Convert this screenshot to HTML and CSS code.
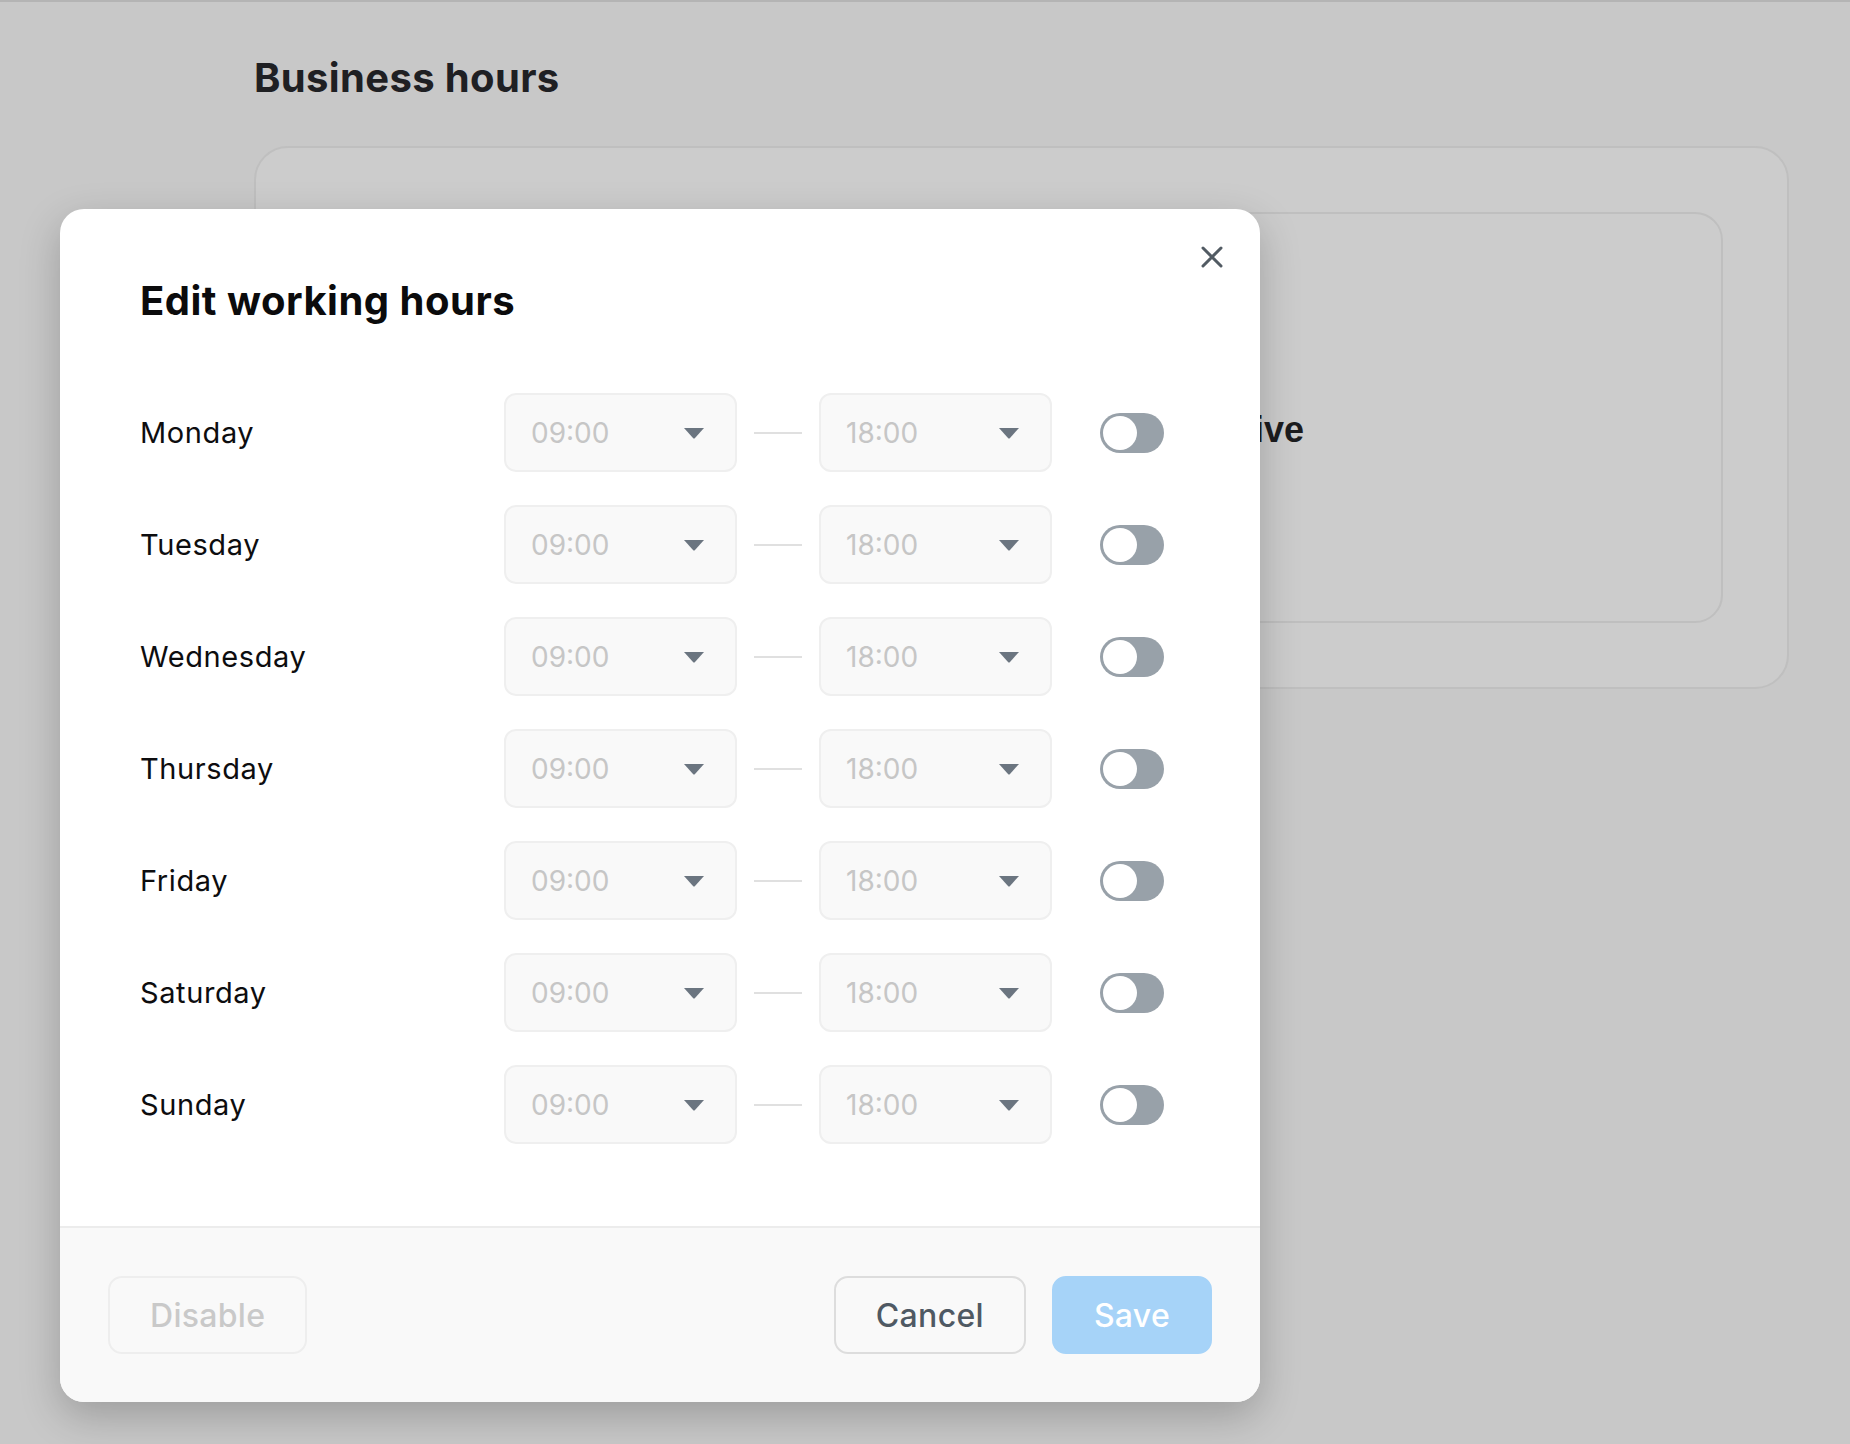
FILE: index.html
```html
<!DOCTYPE html>
<html lang="en">
<head>
    <meta charset="UTF-8">
    <meta name="viewport" content="width=device-width, initial-scale=1.0">
    <title>Business hours</title>
    <link rel="stylesheet" href="styles.css">
</head>
<body>
    <main class="page">
        <h1 class="page-title">Business hours</h1>
        <section class="hours-card">
            <div class="hours-inner">
                <p class="hours-status">Inactive</p>
            </div>
        </section>
    </main>

    <div class="modal">
        <button class="modal-close" aria-label="Close">
            <svg width="22" height="22" viewBox="0 0 22 22">
                <path d="M2 2 L20 20 M20 2 L2 20" stroke="#525b63" stroke-width="3" stroke-linecap="round" fill="none"/>
            </svg>
        </button>

        <div class="modal-body">
            <h2 class="modal-title">Edit working hours</h2>

            <div class="days">
                <div class="day-row">
                    <span class="day-name">Monday</span>
                    <div class="time-select"><span>09:00</span><svg class="caret" width="22" height="12" viewBox="0 0 22 12"><path d="M1 1 H21 L12 11 Q11 12 10 11 Z" fill="#6b7580"/></svg></div>
                    <span class="dash"></span>
                    <div class="time-select"><span>18:00</span><svg class="caret" width="22" height="12" viewBox="0 0 22 12"><path d="M1 1 H21 L12 11 Q11 12 10 11 Z" fill="#6b7580"/></svg></div>
                    <span class="toggle"><span class="knob"></span></span>
                </div>
                <div class="day-row">
                    <span class="day-name">Tuesday</span>
                    <div class="time-select"><span>09:00</span><svg class="caret" width="22" height="12" viewBox="0 0 22 12"><path d="M1 1 H21 L12 11 Q11 12 10 11 Z" fill="#6b7580"/></svg></div>
                    <span class="dash"></span>
                    <div class="time-select"><span>18:00</span><svg class="caret" width="22" height="12" viewBox="0 0 22 12"><path d="M1 1 H21 L12 11 Q11 12 10 11 Z" fill="#6b7580"/></svg></div>
                    <span class="toggle"><span class="knob"></span></span>
                </div>
                <div class="day-row">
                    <span class="day-name">Wednesday</span>
                    <div class="time-select"><span>09:00</span><svg class="caret" width="22" height="12" viewBox="0 0 22 12"><path d="M1 1 H21 L12 11 Q11 12 10 11 Z" fill="#6b7580"/></svg></div>
                    <span class="dash"></span>
                    <div class="time-select"><span>18:00</span><svg class="caret" width="22" height="12" viewBox="0 0 22 12"><path d="M1 1 H21 L12 11 Q11 12 10 11 Z" fill="#6b7580"/></svg></div>
                    <span class="toggle"><span class="knob"></span></span>
                </div>
                <div class="day-row">
                    <span class="day-name">Thursday</span>
                    <div class="time-select"><span>09:00</span><svg class="caret" width="22" height="12" viewBox="0 0 22 12"><path d="M1 1 H21 L12 11 Q11 12 10 11 Z" fill="#6b7580"/></svg></div>
                    <span class="dash"></span>
                    <div class="time-select"><span>18:00</span><svg class="caret" width="22" height="12" viewBox="0 0 22 12"><path d="M1 1 H21 L12 11 Q11 12 10 11 Z" fill="#6b7580"/></svg></div>
                    <span class="toggle"><span class="knob"></span></span>
                </div>
                <div class="day-row">
                    <span class="day-name">Friday</span>
                    <div class="time-select"><span>09:00</span><svg class="caret" width="22" height="12" viewBox="0 0 22 12"><path d="M1 1 H21 L12 11 Q11 12 10 11 Z" fill="#6b7580"/></svg></div>
                    <span class="dash"></span>
                    <div class="time-select"><span>18:00</span><svg class="caret" width="22" height="12" viewBox="0 0 22 12"><path d="M1 1 H21 L12 11 Q11 12 10 11 Z" fill="#6b7580"/></svg></div>
                    <span class="toggle"><span class="knob"></span></span>
                </div>
                <div class="day-row">
                    <span class="day-name">Saturday</span>
                    <div class="time-select"><span>09:00</span><svg class="caret" width="22" height="12" viewBox="0 0 22 12"><path d="M1 1 H21 L12 11 Q11 12 10 11 Z" fill="#6b7580"/></svg></div>
                    <span class="dash"></span>
                    <div class="time-select"><span>18:00</span><svg class="caret" width="22" height="12" viewBox="0 0 22 12"><path d="M1 1 H21 L12 11 Q11 12 10 11 Z" fill="#6b7580"/></svg></div>
                    <span class="toggle"><span class="knob"></span></span>
                </div>
                <div class="day-row">
                    <span class="day-name">Sunday</span>
                    <div class="time-select"><span>09:00</span><svg class="caret" width="22" height="12" viewBox="0 0 22 12"><path d="M1 1 H21 L12 11 Q11 12 10 11 Z" fill="#6b7580"/></svg></div>
                    <span class="dash"></span>
                    <div class="time-select"><span>18:00</span><svg class="caret" width="22" height="12" viewBox="0 0 22 12"><path d="M1 1 H21 L12 11 Q11 12 10 11 Z" fill="#6b7580"/></svg></div>
                    <span class="toggle"><span class="knob"></span></span>
                </div>
            </div>
        </div>

        <div class="modal-footer">
            <button class="btn btn-disable">Disable</button>
            <div class="footer-actions">
                <button class="btn btn-cancel">Cancel</button>
                <button class="btn btn-save">Save</button>
            </div>
        </div>
    </div>
</body>
</html>
```

FILE: styles.css
```css
* {
    margin: 0;
    padding: 0;
    box-sizing: border-box;
}

body {
    background-color: #c8c8c8;
    border-top: 2px solid #b4b4b4;
    min-height: 1444px;
    font-family: 'Inter', 'Open Sans', sans-serif;
    position: relative;
}

.page {
    padding: 0 61px 0 254px;
}

.page-title {
    margin-top: 52px;
    font-size: 40px;
    line-height: 48px;
    font-weight: 700;
    letter-spacing: 0.35px;
    color: #1f2023;
}

.hours-card {
    margin-top: 44px;
    height: 543px;
    padding: 64px;
    border: 2px solid #bfbfbf;
    border-radius: 34px;
    background-color: #cccccc;
}

.hours-inner {
    height: 411px;
    padding: 196px 0 0 848px;
    border: 2px solid #bfbfbf;
    border-radius: 28px;
    background-color: #cccccc;
}

.hours-status {
    font-family: 'Liberation Sans', Arial, sans-serif;
    font-weight: bold;
    font-size: 36px;
    line-height: 40px;
    color: #1c1c1e;
}

/* modal */
.modal {
    position: absolute;
    left: 60px;
    top: 207px;
    width: 1200px;
    background: white;
    border-radius: 24px;
    box-shadow: 0 14px 40px rgba(0,0,0,0.22);
    overflow: hidden;
}

.modal-close {
    position: absolute;
    top: 37px;
    right: 37px;
    width: 22px;
    height: 22px;
    border: none;
    background: none;
    cursor: pointer;
}

.modal-close svg {
    display: block;
}

.modal-body {
    padding: 68px 80px 82px;
}

.modal-title {
    font-size: 40px;
    line-height: 48px;
    font-weight: 650;
    letter-spacing: 0.5px;
    color: #0b0b0c;
}

.days {
    margin-top: 68px;
    display: flex;
    flex-direction: column;
    gap: 33px;
}

.day-row {
    display: flex;
    align-items: center;
}

.day-name {
    width: 364px;
    font-size: 29px;
    letter-spacing: 0.6px;
    color: #0d0d0f;
}

.time-select {
    width: 233px;
    height: 79px;
    display: flex;
    align-items: center;
    justify-content: space-between;
    padding: 0 30px 0 25px;
    background-color: #f9f9f9;
    border: 2px solid #efefef;
    border-radius: 12px;
    font-size: 28px;
    color: #c6c6c6;
}

.dash {
    width: 48px;
    height: 2px;
    margin: 0 17px;
    background-color: #e0e0e0;
}

.toggle {
    margin-left: 48px;
    width: 64px;
    height: 40px;
    padding: 3px;
    border-radius: 20px;
    background-color: #98a1a9;
}

.knob {
    display: block;
    width: 34px;
    height: 34px;
    border-radius: 50%;
    background-color: white;
}

.modal-footer {
    display: flex;
    justify-content: space-between;
    padding: 48px;
    background-color: #f9f9f9;
    border-top: 2px solid #ececec;
}

.footer-actions {
    display: flex;
    gap: 26px;
}

.btn {
    height: 78px;
    padding: 0 40px;
    border-radius: 14px;
    font-family: 'Inter', 'Open Sans', sans-serif;
    font-size: 32px;
    font-weight: 500;
    letter-spacing: 0.3px;
    background: none;
    cursor: pointer;
}

.btn-disable {
    border: 2px solid #eeeeee;
    color: #c9c9c9;
}

.btn-cancel {
    border: 2px solid #dddddd;
    color: #4f5963;
}

.btn-save {
    border: 2px solid #a6d3f8;
    background-color: #a6d3f8;
    color: white;
}
```
